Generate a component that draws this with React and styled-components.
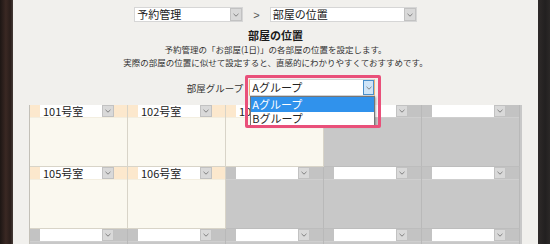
import React from "react";
import styled, { createGlobalStyle } from "styled-components";

const GlobalStyle = createGlobalStyle`
  html, body {
    margin: 0;
    padding: 0;
  }
  body {
    width: 550px;
    height: 244px;
    overflow: hidden;
    background: #f1f0ed;
    font-family: "Noto Sans CJK JP", "Liberation Sans", sans-serif;
    color: #222;
  }
`;

const Frame = styled.div`
  display: flex;
  width: 550px;
  height: 244px;
  overflow: hidden;
`;

const LeftEdge = styled.div`
  width: 13px;
  flex-shrink: 0;
  background: linear-gradient(90deg, #1d1614 0%, #3a2823 45%, #2a1e1b 80%, #463c38 100%);
`;

const RightEdge = styled.div`
  width: 12px;
  flex-shrink: 0;
  background: linear-gradient(90deg, #2e2a29 0%, #222020 60%, #2b2827 100%);
`;

const Paper = styled.div`
  flex: 1;
  display: flex;
  flex-direction: column;
  align-items: center;
  padding-top: 7px;
  background: #f1f0ed;
`;

const NavRow = styled.div`
  display: flex;
  align-items: center;
  gap: 10px;
  height: 15px;
`;

const Arrow = styled.span`
  font-size: 11px;
  color: #555;
  font-family: "Liberation Sans", sans-serif;
`;

const SelectBox = styled.div`
  display: flex;
  width: ${(p) => p.$w}px;
  height: ${(p) => p.$h}px;
  background: #fff;
  box-sizing: border-box;
  border: ${(p) => (p.$bare ? "none" : "1px solid #d6d6d6")};
  ${(p) => p.$focus && "border-left-color: #f0b57a; border-right-color: #f0b57a;"}
`;

const SelectText = styled.div`
  flex: 1;
  white-space: nowrap;
  font-size: 11px;
  line-height: ${(p) => p.$lh}px;
  padding-left: ${(p) => p.$pad}px;
  color: #222;
`;

const SelectButton = styled.div`
  width: ${(p) => p.$w}px;
  flex-shrink: 0;
  display: flex;
  align-items: center;
  justify-content: center;
  box-sizing: border-box;
  background: ${(p) => (p.$focus ? "#cfe5f8" : "#d9d9d9")};
  border: 1px solid ${(p) => (p.$focus ? "#4a8fca" : "#c2c2c2")};
`;

const Chevron = () => (
  <svg width="6" height="4" viewBox="0 0 6 4">
    <polyline points="0.5,0.8 3,3.2 5.5,0.8" fill="none" stroke="#777" strokeWidth="0.9" />
  </svg>
);

const FakeSelect = ({ w, h, btn = 12, text, lh, pad = 2, bare, focus }) => (
  <SelectBox $w={w} $h={h} $bare={bare} $focus={focus}>
    <SelectText $lh={lh || h} $pad={pad}>{text}</SelectText>
    <SelectButton $w={btn} $focus={focus}>
      <Chevron />
    </SelectButton>
  </SelectBox>
);

const Title = styled.h2`
  margin: 7px 0 0;
  font-size: 11px;
  line-height: 13px;
  font-weight: 700;
  color: #1a1a1a;
`;

const Desc = styled.p`
  margin: 1px 0 0;
  font-size: 8.5px;
  line-height: 12.5px;
  text-align: center;
  color: #333;
`;

const GroupRow = styled.div`
  display: flex;
  align-items: center;
  gap: 6px;
  margin: 11px 0 0 11px;
  height: 17px;
`;

const GroupLabel = styled.span`
  font-size: 9.5px;
  color: #333;
`;

const GroupWrap = styled.div`
  position: relative;
`;

const OptionList = styled.div`
  position: absolute;
  top: 17px;
  left: 1px;
  width: 125px;
  box-sizing: border-box;
  background: #fff;
  border: 1px solid #767676;
  box-shadow: 1px 1px 2px rgba(0, 0, 0, 0.3);
  z-index: 5;
`;

const Option = styled.div`
  height: ${(p) => p.$h}px;
  line-height: ${(p) => p.$h}px;
  font-size: 11px;
  padding-left: 1px;
  background: ${(p) => (p.$active ? "#3092ec" : "#fff")};
  color: ${(p) => (p.$active ? "#fff" : "#222")};
`;

const Highlight = styled.div`
  position: absolute;
  left: -4px;
  top: -4px;
  right: -6px;
  bottom: -32px;
  border: 3px solid #e9507a;
  border-radius: 2px;
  pointer-events: none;
  z-index: 6;
`;

const Grid = styled.div`
  display: grid;
  grid-template-columns: repeat(5, 98px);
  margin-top: 9px;
  padding-right: 2px;
  border-left: 1px solid #c3c0b8;
  background: #c8c8c8;
`;

const Cell = styled.div`
  display: flex;
  flex-direction: column;
  height: 62px;
  box-sizing: border-box;
  border-right: 1px solid ${(p) => (p.$on ? "#d8d4c8" : "#b9b9b9")};
  border-bottom: 1px solid ${(p) => (p.$on ? "#d8d4c8" : "#bdbdbd")};
`;

const CellHead = styled.div`
  display: flex;
  height: 12px;
  padding-left: 10px;
  background: ${(p) => (p.$on ? "#fce8cd" : "#c3c3c3")};
`;

const CellBody = styled.div`
  flex: 1;
  background: ${(p) => (p.$on ? "#faf8ef" : "#c8c8c8")};
  border-top: 1px solid ${(p) => (p.$on ? "#f3eee0" : "#cfcfcf")};
`;

const rooms = [
  "101号室", "102号室", "103号室", null, null,
  "105号室", "106号室", null, null, null,
  null, null, null, null, null,
];

export default function App() {
  return (
    <>
      <GlobalStyle />
      <Frame>
        <LeftEdge />
        <Paper>
          <NavRow>
            <FakeSelect w={109} h={15} text="予約管理" lh={13} />
            <Arrow>&gt;</Arrow>
            <FakeSelect w={147} h={15} text="部屋の位置" lh={13} />
          </NavRow>
          <Title>部屋の位置</Title>
          <Desc>
            予約管理の「お部屋(1日)」の各部屋の位置を設定します。
            <br />
            実際の部屋の位置に似せて設定すると、直感的にわかりやすくておすすめです。
          </Desc>
          <GroupRow>
            <GroupLabel>部屋グループ</GroupLabel>
            <GroupWrap>
              <FakeSelect w={126} h={17} btn={11} text="Aグループ" lh={15} pad={2} focus />
              <OptionList>
                <Option $h={15} $active>Aグループ</Option>
                <Option $h={13}>Bグループ</Option>
              </OptionList>
              <Highlight />
            </GroupWrap>
          </GroupRow>
          <Grid>
            {rooms.map((name, i) => (
              <Cell key={i} $on={!!name}>
                <CellHead $on={!!name}>
                  <FakeSelect w={74} h={12} text={name || ""} lh={13} pad={3} bare />
                </CellHead>
                <CellBody $on={!!name} />
              </Cell>
            ))}
          </Grid>
        </Paper>
        <RightEdge />
      </Frame>
    </>
  );
}
